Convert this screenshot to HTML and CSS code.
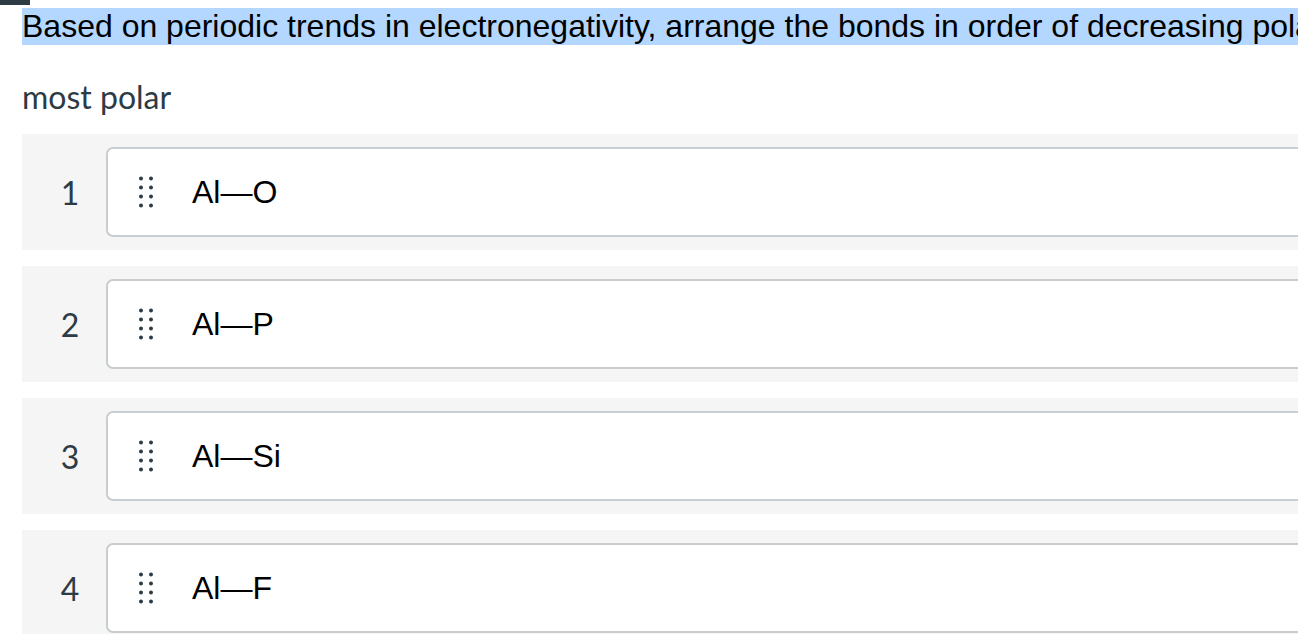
FILE: index.html
```html
<!DOCTYPE html>
<html lang="en">
<head>
    <meta charset="UTF-8">
    <meta name="viewport" content="width=device-width, initial-scale=1.0">
    <title>Ordering question</title>
    <link rel="stylesheet" href="styles.css">
</head>
<body>
    <div class="topbar"></div>

    <div class="question">Based on periodic trends in electronegativity, arrange the bonds in order of decreasing polarity.</div>

    <div class="label">most polar</div>

    <div class="order-list">
        <div class="order-row">
            <div class="order-num">1</div>
            <div class="order-card">
                <svg class="handle" width="14" height="32" viewBox="0 0 14 32">
                    <circle cx="2" cy="2.5" r="2"/><circle cx="12" cy="2.5" r="2"/>
                    <circle cx="2" cy="11.5" r="2"/><circle cx="12" cy="11.5" r="2"/>
                    <circle cx="2" cy="20.5" r="2"/><circle cx="12" cy="20.5" r="2"/>
                    <circle cx="2" cy="29.5" r="2"/><circle cx="12" cy="29.5" r="2"/>
                </svg>
                <span class="bond">Al—O</span>
            </div>
        </div>
        <div class="order-row">
            <div class="order-num">2</div>
            <div class="order-card">
                <svg class="handle" width="14" height="32" viewBox="0 0 14 32">
                    <circle cx="2" cy="2.5" r="2"/><circle cx="12" cy="2.5" r="2"/>
                    <circle cx="2" cy="11.5" r="2"/><circle cx="12" cy="11.5" r="2"/>
                    <circle cx="2" cy="20.5" r="2"/><circle cx="12" cy="20.5" r="2"/>
                    <circle cx="2" cy="29.5" r="2"/><circle cx="12" cy="29.5" r="2"/>
                </svg>
                <span class="bond">Al—P</span>
            </div>
        </div>
        <div class="order-row">
            <div class="order-num">3</div>
            <div class="order-card">
                <svg class="handle" width="14" height="32" viewBox="0 0 14 32">
                    <circle cx="2" cy="2.5" r="2"/><circle cx="12" cy="2.5" r="2"/>
                    <circle cx="2" cy="11.5" r="2"/><circle cx="12" cy="11.5" r="2"/>
                    <circle cx="2" cy="20.5" r="2"/><circle cx="12" cy="20.5" r="2"/>
                    <circle cx="2" cy="29.5" r="2"/><circle cx="12" cy="29.5" r="2"/>
                </svg>
                <span class="bond">Al—Si</span>
            </div>
        </div>
        <div class="order-row">
            <div class="order-num">4</div>
            <div class="order-card">
                <svg class="handle" width="14" height="32" viewBox="0 0 14 32">
                    <circle cx="2" cy="2.5" r="2"/><circle cx="12" cy="2.5" r="2"/>
                    <circle cx="2" cy="11.5" r="2"/><circle cx="12" cy="11.5" r="2"/>
                    <circle cx="2" cy="20.5" r="2"/><circle cx="12" cy="20.5" r="2"/>
                    <circle cx="2" cy="29.5" r="2"/><circle cx="12" cy="29.5" r="2"/>
                </svg>
                <span class="bond">Al—F</span>
            </div>
        </div>
    </div>
</body>
</html>
```

FILE: styles.css
```css
html {
    overflow: hidden;
}
body {
    margin: 0;
    width: 1500px;
    overflow: hidden;
    background: white;
    font-family: 'Liberation Sans', Arial, sans-serif;
    color: #000;
}
.topbar {
    width: 30px;
    height: 5px;
    background: #2d3b45;
}
.question {
    margin: 3px 0 0 22px;
    background: #b3d7fe;
    font-size: 32px;
    line-height: 37px;
    white-space: nowrap;
}
.label {
    margin: 33px 0 0 22px;
    font-family: Lato, sans-serif;
    font-size: 32px;
    line-height: 38px;
    color: #2d3b45;
}
.order-list {
    margin: 18px 0 0 22px;
    display: flex;
    flex-direction: column;
    gap: 16px;
}
.order-row {
    display: flex;
    align-items: center;
    background: #f5f5f5;
    padding: 13px 0;
}
.order-num {
    width: 84px;
    box-sizing: border-box;
    padding-left: 12px;
    text-align: center;
    font-family: Lato, sans-serif;
    font-size: 32px;
    color: #2d3b45;
}
.order-card {
    flex: 1;
    height: 90px;
    box-sizing: border-box;
    display: flex;
    align-items: center;
    background: white;
    border: 2px solid #c7cdd1;
    border-radius: 7px;
    padding-left: 31px;
}
.handle {
    fill: #2d3b45;
    margin-right: 39px;
}
.bond {
    font-size: 32px;
}
```
